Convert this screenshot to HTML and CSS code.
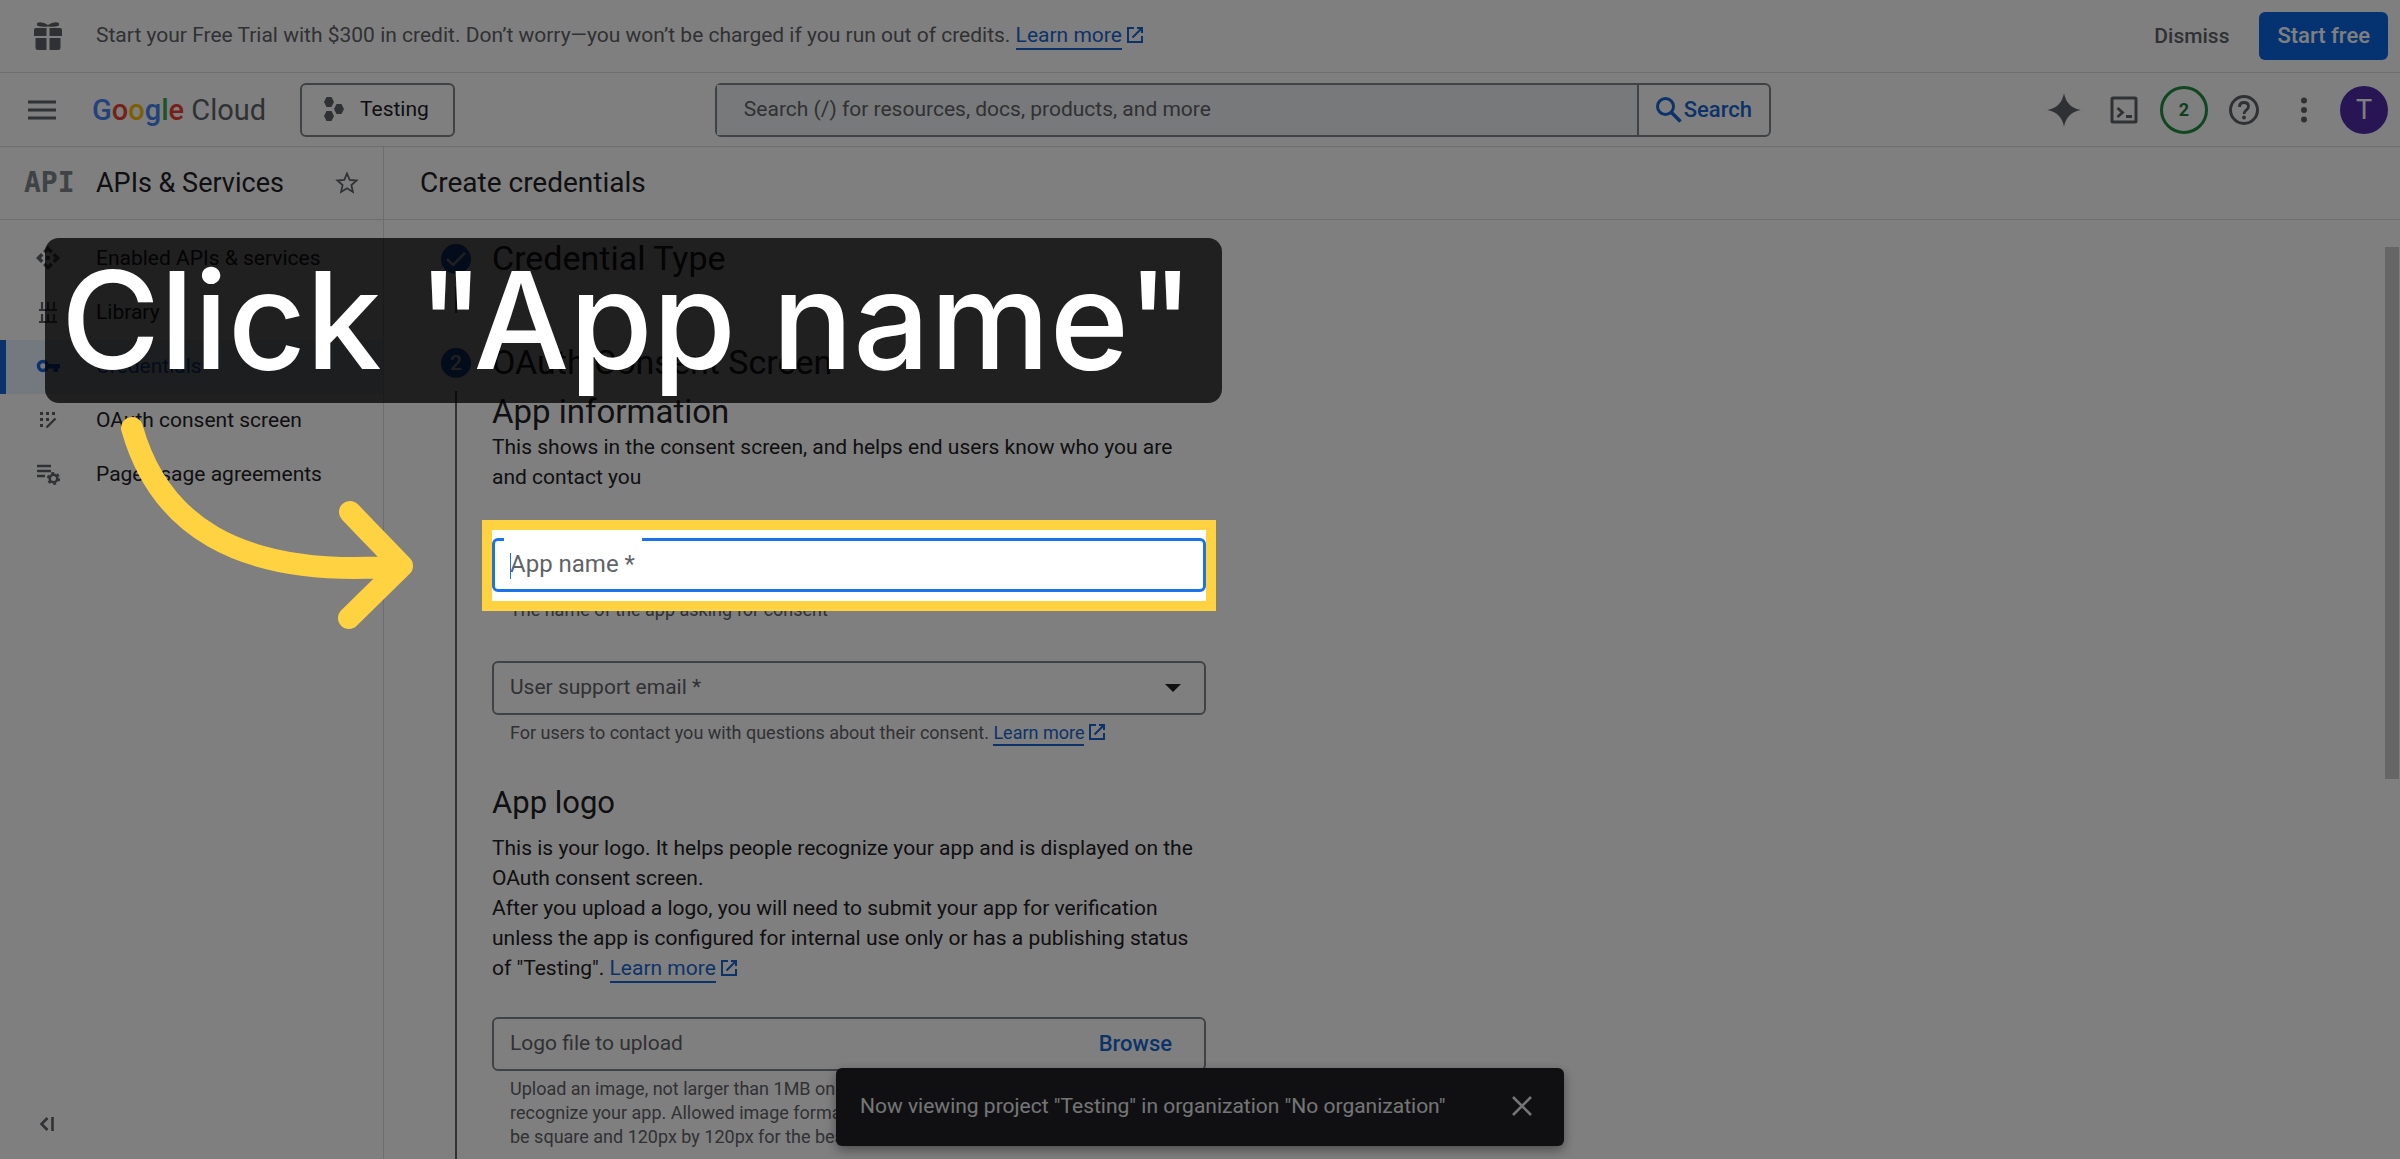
FILE: index.html
```html
<!DOCTYPE html>
<html lang="en">
<head>
<meta charset="utf-8">
<title>Create credentials – APIs &amp; Services – Google Cloud console</title>
<meta name="viewport" content="width=device-width, initial-scale=1">
<link rel="stylesheet" href="styles.css">
</head>
<body>
<svg class="defs" aria-hidden="true">
  <symbol id="external" viewBox="0 0 18 18"><path d="M8 2H2v14h14v-6M11 2h5v5M16 2 6.500 11.500" fill="none" stroke="currentColor" stroke-width="2"/></symbol>
</svg>

<div class="banner">
  <svg class="gift" viewBox="0 0 28 28" aria-hidden="true"><path d="M0 8q0-2 2-2h10.500v8H0zM15.500 6H26q2 0 2 2v6H15.500zM1.500 16h11v12H4q-2.500 0-2.500-2.500zM15.500 16h11v9.500Q26.500 28 24 28h-8.500zM3 1q5-2 11 2 6-4 11-2v2.500q-4 2-11 1-7 1-11-1z" fill="currentColor"/></svg>
  <p class="banner-text">Start your Free Trial with $300 in credit. Don’t worry—you won’t be charged if you run out of credits. <a class="link" href="#">Learn more</a><svg class="ext" aria-hidden="true"><use href="#external"/></svg></p>
  <button class="dismiss" type="button">Dismiss</button>
  <button class="start" type="button">Start free</button>
</div>

<header class="topbar">
  <button class="icon-btn menu" type="button" aria-label="Main menu">
    <svg width="28" height="20" viewBox="0 0 28 20"><path d="M0 2h28M0 10h28M0 18h28" stroke="currentColor" stroke-width="3"/></svg>
  </button>
  <a class="logo" href="#"><span class="c-blue">G</span><span class="c-red">o</span><span class="c-yellow">o</span><span class="c-blue">g</span><span class="c-green">l</span><span class="c-red">e</span> <span class="cloud">Cloud</span></a>
  <button class="project" type="button">
    <svg width="20" height="24" viewBox="0 0 20 24" aria-hidden="true"><path d="M2.500 0h5L10 5 7.500 10h-5L0 5zM2.500 14h5l2.500 5-2.500 5h-5L0 19zM12.500 7h5l2.500 5-2.500 5h-5L10 12z" fill="currentColor"/></svg>
    Testing
  </button>
  <form class="search">
    <input type="text" aria-label="Search" placeholder="Search (/) for resources, docs, products, and more">
    <button type="button"><svg width="26" height="26" viewBox="0 0 26 26" aria-hidden="true"><circle cx="9.500" cy="9.500" r="8" fill="none" stroke="currentColor" stroke-width="3"/><path d="m15 15 9.500 9.500" stroke="currentColor" stroke-width="3.500"/></svg>Search</button>
  </form>
  <div class="tools">
    <button class="icon-btn" type="button" aria-label="Gemini"><svg width="34" height="34" viewBox="0 0 34 34"><path d="M17 0Q19.500 14.500 34 17 19.500 19.500 17 34 14.500 19.500 0 17 14.500 14.500 17 0z" fill="currentColor"/></svg></button>
    <button class="icon-btn" type="button" aria-label="Cloud Shell"><svg width="28" height="28" viewBox="0 0 28 28"><rect x="2" y="2" width="24" height="24" rx="1" fill="none" stroke="currentColor" stroke-width="3"/><path d="m7.500 12 5 4.500-5 4.500M16 20.500h6" fill="none" stroke="currentColor" stroke-width="2.800"/></svg></button>
    <button class="icon-btn" type="button" aria-label="Notifications"><span class="badge">2</span></button>
    <button class="icon-btn" type="button" aria-label="Help"><svg width="30" height="30" viewBox="0 0 30 30"><circle cx="15" cy="15" r="13.500" fill="none" stroke="currentColor" stroke-width="3"/><path d="M10.500 12q0-4.500 4.500-4.500t4.500 4q0 2-2.500 3.800-2 1.500-2 3.700" fill="none" stroke="currentColor" stroke-width="2.800"/><circle cx="15" cy="22.500" r="1.900" fill="currentColor"/></svg></button>
    <button class="icon-btn" type="button" aria-label="More"><svg width="6" height="26" viewBox="0 0 6 26"><circle cx="3" cy="3.500" r="3"/><circle cx="3" cy="13" r="3"/><circle cx="3" cy="22.500" r="3"/></svg></button>
    <button class="icon-btn" type="button" aria-label="Account"><span class="avatar">T</span></button>
  </div>
</header>

<div class="shell">
  <nav class="sidebar" aria-label="APIs &amp; Services">
    <div class="side-head">
      <span class="api">API</span>
      <h2>APIs &amp; Services</h2>
      <button class="icon-btn star" type="button" aria-label="Pin product"><svg width="24" height="24" viewBox="0 0 24 24"><path d="m12 2.500 2.700 6.400 6.900.6-5.200 4.600 1.500 6.800-5.900-3.600-5.900 3.600 1.500-6.800L2.400 9.500l6.900-.6z" fill="none" stroke="currentColor" stroke-width="1.800"/></svg></button>
    </div>
    <ul>
      <li><a href="#"><svg viewBox="0 0 24 24" aria-hidden="true"><path d="m12 0 5 5-2.500 2.500L12 5 9.500 7.500 7 5zM12 24l-5-5 2.500-2.500L12 19l2.500-2.500L17 19zM0 12l5-5 2.500 2.500L5 12l2.500 2.500L5 17zM24 12l-5 5-2.500-2.500L19 12l-2.500-2.500L19 7z"/><circle cx="12" cy="12" r="2.300"/></svg>Enabled APIs &amp; services</a></li>
      <li><a href="#"><svg viewBox="0 0 24 24" aria-hidden="true"><path d="M3 10h18M3 22h18M6 2v8M12 2v8M18 2v8M6 14v8M12 14v8M18 14v8" fill="none" stroke="currentColor" stroke-width="2.200"/></svg>Library</a></li>
      <li><a class="current" href="#" aria-current="page"><svg viewBox="0 0 24 24" aria-hidden="true"><circle cx="7" cy="12" r="4.500" fill="none" stroke="currentColor" stroke-width="3.500"/><path d="M11 10h13v4.500h-2V18h-4.500v-3.500H11z"/></svg>Credentials</a></li>
      <li><a href="#"><svg viewBox="0 0 24 24" aria-hidden="true"><path d="M4 4h3v3H4zM10 4h3v3h-3zM16 4h3v3h-3zM4 10h3v3H4zM10 10h3v3h-3zM4 16h3v3H4z"/><path d="m10.500 19.500 9-9" stroke="currentColor" stroke-width="2.400"/></svg>OAuth consent screen</a></li>
      <li><a href="#"><svg viewBox="0 0 24 24" aria-hidden="true"><path d="M1 4h14M1 9h14M1 14h8" fill="none" stroke="currentColor" stroke-width="2.400"/><circle cx="17.500" cy="16.500" r="3.800" fill="none" stroke="currentColor" stroke-width="2.600"/><circle cx="17.500" cy="16.500" r="5.600" fill="none" stroke="currentColor" stroke-width="2" stroke-dasharray="2.930 2.930"/></svg>Page usage agreements</a></li>
    </ul>
    <button class="icon-btn collapse" type="button" aria-label="Collapse navigation"><svg width="16" height="14" viewBox="0 0 16 14"><path d="M8.500 1 2.500 7l6 6M13.500 0v14" fill="none" stroke="currentColor" stroke-width="2.600"/></svg></button>
  </nav>

  <div class="page">
    <h1>Create credentials</h1>
    <div class="scroller">
      <main>
        <section class="step">
          <span class="marker"><svg width="22" height="18" viewBox="0 0 22 18" aria-label="Completed"><path d="m2 9 6 6L20 3" fill="none" stroke="currentColor" stroke-width="2.500"/></svg></span>
          <h3>Credential Type</h3>
          <div class="rail"></div>
        </section>
        <section class="step open">
          <span class="marker">2</span>
          <h3>OAuth Consent Screen</h3>
          <div class="rail"></div>
          <div class="step-body">
            <h4>App information</h4>
            <p>This shows in the consent screen, and helps end users know who you are and contact you</p>

            <div class="field focused">
              <label for="app-name">App name *</label>
              <input id="app-name" type="text">
              <div class="spotlight"></div>
            </div>
            <p class="hint">The name of the app asking for consent</p>

            <div class="field">
              <label for="email">User support email *</label>
              <select id="email"><option></option></select>
              <svg class="caret" width="16" height="8" viewBox="0 0 16 8" aria-hidden="true"><path d="M0 0h16L8 8z"/></svg>
            </div>
            <p class="hint">For users to contact you with questions about their consent. <a class="link" href="#">Learn more</a><svg class="ext" aria-hidden="true"><use href="#external"/></svg></p>

            <h4 class="gap">App logo</h4>
            <p>This is your logo. It helps people recognize your app and is displayed on the OAuth consent screen.<br>After you upload a logo, you will need to submit your app for verification unless the app is configured for internal use only or has a publishing status of "Testing". <a class="link" href="#">Learn more</a><svg class="ext" aria-hidden="true"><use href="#external"/></svg></p>

            <div class="field upload">
              <label for="logo-file">Logo file to upload</label>
              <input id="logo-file" type="text" readonly>
              <button type="button">Browse</button>
            </div>
            <p class="hint">Upload an image, not larger than 1MB on the consent screen that will help users recognize your app. Allowed image formats are JPG, PNG, and BMP. Logos should be&nbsp;square and 120px by 120px for the best results.</p>
          </div>
        </section>
      </main>
      <div class="track"><div class="thumb"></div></div>
    </div>
  </div>
</div>

<div class="toast" role="status">
  <span>Now viewing project "Testing" in organization "No organization"</span>
  <button class="icon-btn" type="button" aria-label="Close"><svg width="20" height="20" viewBox="0 0 20 20"><path d="m1 1 18 18M19 1 1 19" stroke="currentColor" stroke-width="2.600"/></svg></button>
</div>

<div class="caption">Click "App name"</div>
<svg class="arrow" width="300" height="220" viewBox="120 412 300 220" aria-hidden="true"><path d="M132 428C158 520 232 580 402 566M350 512 402 566 349 618" fill="none" stroke="currentColor" stroke-width="22" stroke-linecap="round" stroke-linejoin="round"/></svg>
</body>
</html>
```
FILE: styles.css
```css
:root {
  --ui: Roboto, "Liberation Sans", sans-serif;
  --display: Roboto, "Liberation Sans", sans-serif;
  --ink: #202124;
  --muted: #5f6368;
  --line: #dadce0;
  --outline: #80868b;
  --blue: #1967d2;
  --mark: #ffd242;
}

* { box-sizing: border-box; }

body {
  position: relative;
  display: flex;
  flex-direction: column;
  height: 100vh;
  margin: 0;
  overflow: hidden;
  background: #fff;
  color: var(--ink);
  font: 21px/30px var(--ui);
}

h1, h2, h3, h4, p, ul { margin: 0; padding: 0; font-weight: 400; }
ul { list-style: none; }
button, input, select { font: inherit; color: inherit; }
button { padding: 0; border: 0; background: none; cursor: pointer; }
svg { flex: none; fill: currentColor; }
.defs { position: absolute; width: 0; height: 0; }

.icon-btn {
  display: flex;
  align-items: center;
  justify-content: center;
  color: #5f6368;
}

.link {
  padding-bottom: 1px;
  border-bottom: 2px solid var(--blue);
  color: var(--blue);
  text-decoration: none;
}
.ext { width: 18px; height: 18px; margin-left: 4px; color: var(--blue); vertical-align: -2px; }

/* Free trial banner */
.banner {
  display: flex;
  flex: none;
  align-items: center;
  height: 73px;
  padding: 0 12px 0 34px;
  border-bottom: 1px solid var(--line);
}
.gift { width: 28px; height: 28px; margin-right: 34px; color: var(--muted); }
.banner-text { flex: 1; padding-bottom: 2px; color: var(--muted); }
.dismiss, .start { height: 48px; font-family: var(--display); font-weight: 500; }
.dismiss { margin-right: 30px; color: var(--muted); }
.start {
  padding: 0 18px;
  border-radius: 6px;
  background: #0b67e4;
  color: #fff;
  font-size: 22px;
}

/* Top bar */
.topbar {
  display: flex;
  flex: none;
  align-items: center;
  height: 74px;
  padding: 0 6px 0 28px;
  border-bottom: 1px solid var(--line);
}
.logo {
  width: 208px;
  margin-left: 36px;
  font: 29px/40px var(--display);
  text-decoration: none;
}
.c-blue { color: #4285f4; }
.c-red { color: #ea4335; }
.c-yellow { color: #fbbc04; }
.c-green { color: #34a853; }
.c-blue, .c-red, .c-yellow, .c-green { font-weight: 500; }
.cloud { color: var(--muted); }
.project {
  display: flex;
  align-items: center;
  gap: 16px;
  height: 54px;
  padding: 0 24px 2px 22px;
  border: 2px solid var(--outline);
  border-radius: 6px;
}
.project svg { color: var(--muted); }
.search {
  display: flex;
  width: 1056px;
  height: 54px;
  margin-left: 260px;
  border: 2px solid var(--outline);
  border-radius: 6px;
}
.search input {
  flex: 1;
  padding: 0 27px 2px;
  border: 0;
  background: #f1f3f4;
}
.search input::placeholder { color: var(--muted); opacity: 1; }
.search button {
  display: flex;
  align-items: center;
  justify-content: center;
  gap: 2px;
  width: 132px;
  border-left: 2px solid var(--outline);
  color: var(--blue);
  font-family: var(--display);
  font-size: 22px;
  font-weight: 500;
}
.tools { display: flex; margin-left: auto; }
.tools .icon-btn { width: 60px; height: 60px; }
.badge, .avatar {
  width: 48px;
  height: 48px;
  border-radius: 50%;
}
.badge {
  border: 3px solid #1e8e3e;
  color: #188038;
  font-weight: 700;
  font-size: 18px;
  line-height: 42px;
}
.avatar { background: #512da8; color: #fff; font-size: 27px; line-height: 48px; }

/* Sidebar */
.shell { display: flex; flex: 1; min-height: 0; }
.sidebar {
  display: flex;
  flex: none;
  flex-direction: column;
  width: 384px;
  border-right: 1px solid var(--line);
}
.side-head {
  display: flex;
  flex: none;
  align-items: center;
  height: 73px;
  padding: 0 24px 0 24px;
  border-bottom: 1px solid var(--line);
}
.api { width: 72px; color: #80868b; font: 700 28px/30px "DejaVu Sans Mono", monospace; }
.side-head h2 { font: 27px/36px var(--display); }
.star { margin-left: auto; }
.sidebar ul { padding-top: 12px; }
.sidebar li a {
  display: flex;
  align-items: center;
  gap: 36px;
  height: 54px;
  padding: 0 0 2px 36px;
  color: var(--ink);
  text-decoration: none;
}
.sidebar li svg { width: 24px; height: 24px; color: var(--muted); }
.sidebar li .current {
  padding-left: 30px;
  border-left: 6px solid var(--blue);
  background: #e8f0fe;
  color: var(--blue);
}
.sidebar li .current svg { color: var(--blue); }
.collapse { width: 48px; height: 48px; margin: auto 0 11px 23px; }

/* Page */
.page { display: flex; flex: 1; flex-direction: column; min-width: 0; }
h1 {
  flex: none;
  height: 73px;
  padding: 18px 0 0 36px;
  border-bottom: 1px solid var(--line);
  font: 28px/36px var(--display);
}
.scroller { display: flex; flex: 1; min-height: 0; }
main { flex: 1; padding: 24px 57px 0; }
.track { width: 15px; padding-top: 27px; }
.thumb { width: 14px; height: 532px; background: #ccc; }

.step {
  display: grid;
  grid-template: 30px minmax(74px, auto) / 30px minmax(0, 714px);
  column-gap: 21px;
}
.marker {
  display: flex;
  align-items: center;
  justify-content: center;
  border-radius: 50%;
  background: var(--blue);
  color: #fff;
  font-weight: 500;
}
.step h3 { font: 34px/28px var(--display); }
.rail {
  width: 2px;
  margin: 13px 0 35px 14px;
  background: #5f6368;
}
.open .rail { margin-bottom: 0; }
.step-body { padding: 14px 0 48px; }
h4 { font: 33px/40px var(--display); }
h4.gap { margin: 38px 0 10px; font-size: 31px; }

.field {
  position: relative;
  display: grid;
  grid-template-columns: 1fr auto;
  align-items: center;
  height: 54px;
  margin-top: 39px;
  border: 2px solid var(--outline);
  border-radius: 6px;
}
.field label {
  grid-area: 1 / 1;
  padding: 0 0 3px 16px;
  color: var(--muted);
  pointer-events: none;
}
.field input, .field select {
  grid-area: 1 / 1 / 2 / 3;
  width: 100%;
  height: 50px;
  padding: 0 16px;
  border: 0;
  outline: 0;
  background: none;
  appearance: none;
}
.field .caret { grid-area: 1 / 2; margin-right: 23px; color: var(--ink); }
.field button {
  grid-area: 1 / 2;
  margin-right: 32px;
  color: var(--blue);
  font-family: var(--display);
  font-size: 22px;
  font-weight: 500;
}
.field.upload { margin-top: 34px; }
.field.focused {
  margin-top: 46px;
  border: 3px solid #1a73e8;
}
.field.focused label { padding-left: 15px; font-size: 24px; }
.field.focused input { height: 48px; }

/* Break in the outline above the label */
.focused::before {
  position: absolute;
  top: -3px;
  left: 9px;
  width: 138px;
  height: 3px;
  background: #fff;
  content: "";
}
/* Text cursor */
.focused::after {
  position: absolute;
  top: 12px;
  left: 15px;
  width: 1px;
  height: 26px;
  background: #1a73e8;
  content: "";
}

.hint { padding: 6px 18px 0; color: var(--muted); font-size: 18px; line-height: 24px; }

/* Toast */
.toast {
  position: absolute;
  bottom: 13px;
  left: 50%;
  display: flex;
  align-items: center;
  justify-content: space-between;
  width: 728px;
  height: 78px;
  margin-left: -364px;
  padding: 0 32px 2px 24px;
  border-radius: 6px;
  background: #202124;
  box-shadow: 0 4px 12px rgba(0, 0, 0, .4);
  color: #e8eaed;
}
.toast .icon-btn { color: #e8eaed; }

/* Tutorial layer */
.spotlight {
  position: absolute;
  z-index: 10;
  inset: -21px -13px -22px;
  border: 10px solid var(--mark);
  box-shadow: 0 0 0 3000px rgba(0, 0, 0, .5);
  pointer-events: none;
}
.caption {
  position: absolute;
  z-index: 11;
  top: 238px;
  left: 45px;
  padding: 0 28px 0 16px;
  border-radius: 14px;
  background: rgba(0, 0, 0, .75);
  color: #fff;
  font: 500 135px/165px Inter, "Liberation Sans", sans-serif;
  white-space: nowrap;
}
.arrow {
  position: absolute;
  z-index: 12;
  top: 412px;
  left: 120px;
  color: var(--mark);
}
```
